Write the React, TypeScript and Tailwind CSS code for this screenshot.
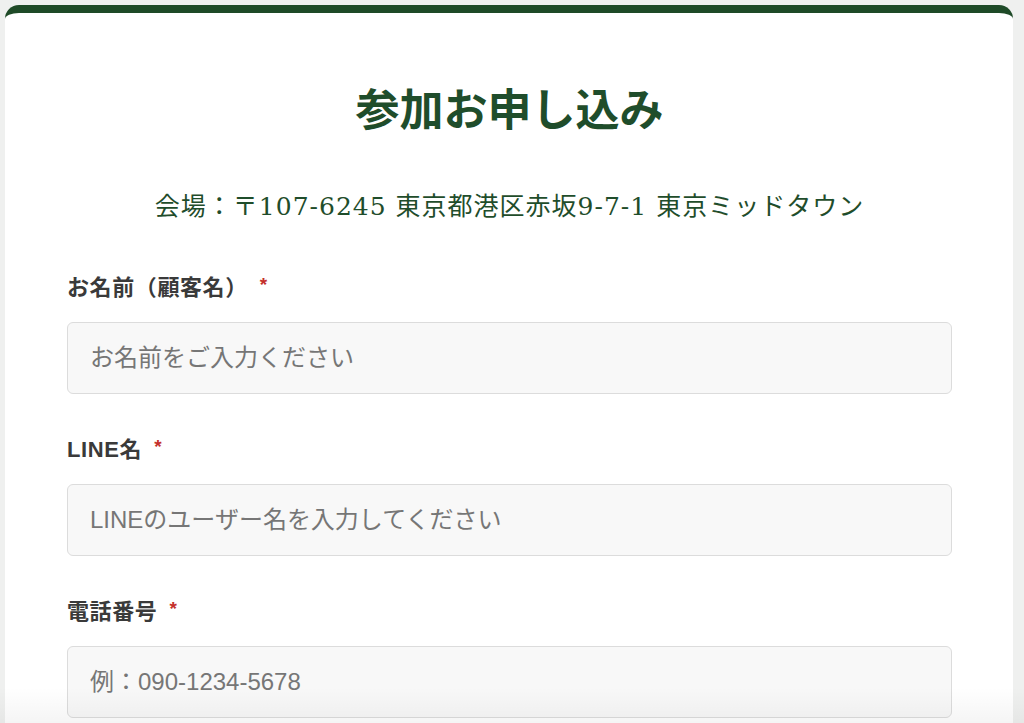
const fields = [
  { label: "お名前（顧客名）", placeholder: "お名前をご入力ください", type: "text" },
  { label: "LINE名", placeholder: "LINEのユーザー名を入力してください", type: "text" },
  { label: "電話番号", placeholder: "例：090-1234-5678", type: "tel" },
];

function Field({ label, placeholder, type }: { label: string; placeholder: string; type: string }) {
  return (
    <div className="flex flex-col">
      <label className="mb-[19px] block h-[30px] leading-[30px]">
        <span className="text-[22px] font-bold tracking-[0.6px] text-[#3a3a3a]">{label}</span>
        <span className="ml-3 align-[4px] text-[19px] leading-none font-bold text-[#c4302b]">*</span>
      </label>
      <input
        type={type}
        placeholder={placeholder}
        className="h-[72px] w-full rounded-[6px] border border-[#dcdcdc] bg-[#f8f8f8] px-[22px] text-[24px] text-[#333] placeholder:text-[#767676] outline-none"
      />
    </div>
  );
}

export default function App() {
  return (
    <div className="relative h-[723px] overflow-hidden bg-[#eff0ef] pl-[5px] pr-[11px] pt-[5px] font-['Liberation_Sans','Noto_Sans_CJK_JP',sans-serif]">
      <div className="rounded-t-[14px] border-t-8 border-[#1e4a27] bg-white pl-[62px] pr-[61px] pt-[68px] pb-12">
        {/* Title */}
        <h1 className="text-center text-[44px] leading-[52px] font-bold text-[#1f4d2b] font-['Noto_Sans_CJK_JP',serif]">
          参加お申し込み
        </h1>
        <p className="mt-[56px] text-center text-[25px] leading-[36px] tracking-[1px] text-[#1f4d2b] font-['DejaVu_Serif','Noto_Sans_CJK_JP',serif]">
          会場：〒107-6245 東京都港区赤坂9-7-1 東京ミッドタウン
        </p>

        {/* Form */}
        <form className="mt-[48px] flex flex-col gap-[41px]">
          {fields.map((f) => (
            <Field key={f.label} {...f} />
          ))}
        </form>
      </div>
      <div className="pointer-events-none absolute inset-x-0 bottom-0 h-9 bg-gradient-to-b from-transparent to-black/[0.04]" />
    </div>
  );
}
